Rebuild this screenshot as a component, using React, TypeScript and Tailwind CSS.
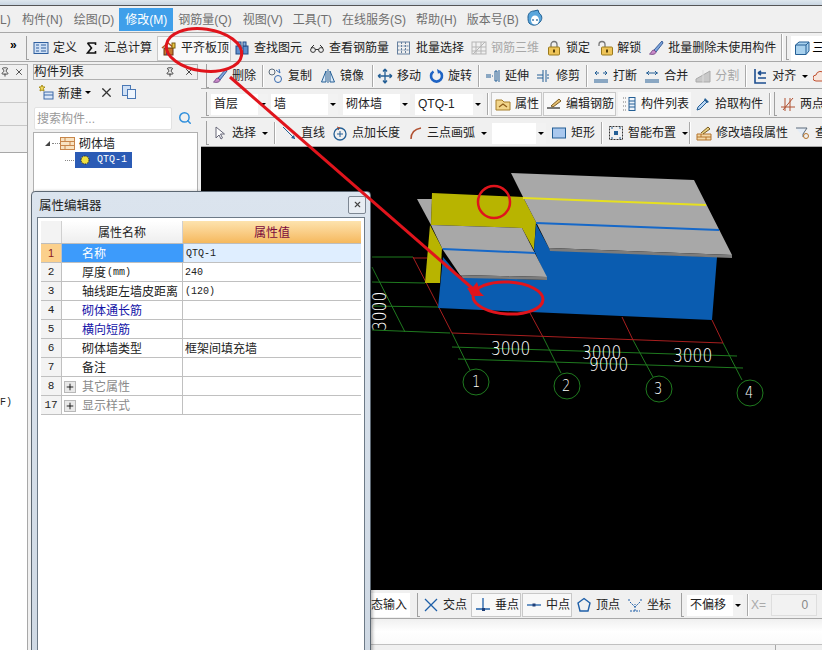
import React from 'react';
import { Search, Pin, X, Plus } from 'lucide-react';

const Ic = ({ children }: { children: React.ReactNode }) => (
  <svg width="16" height="16" viewBox="0 0 16 16" fill="none" className="shrink-0">
    {children}
  </svg>
);

const icons: Record<string, React.ReactNode> = {
  define: <><rect x="1" y="2.5" width="14" height="11" fill="#cfe0f5" stroke="#2f5f9e" /><path d="M8 5h5M8 8h5M8 11h5M3 5h3M3 8h3M3 11h3" stroke="#2f5f9e" /></>,
  sigma: <path d="M3.5 3h8v2M3.5 3l4 5-4 5h8v-2" stroke="#111" strokeWidth="1.6" />,
  slab: <><path d="M1 8l6-5 6 5" stroke="#b5541c" strokeWidth="1.5" /><rect x="3" y="8" width="9" height="7" fill="#c6792d" stroke="#6b3410" /><rect x="11" y="3" width="3" height="5" fill="#e9c33c" stroke="#7a5f10" /><path d="M5 15v-4h3v4" fill="#33518a" /></>,
  find: <><rect x="2" y="6" width="5" height="8" fill="#5d8fce" stroke="#234b85" /><rect x="9" y="6" width="5" height="8" fill="#5d8fce" stroke="#234b85" /><rect x="4" y="2" width="3" height="4" fill="#86b0e0" stroke="#234b85" /><rect x="9" y="2" width="3" height="4" fill="#86b0e0" stroke="#234b85" /><path d="M7 8h2" stroke="#234b85" /></>,
  glasses: <><circle cx="4" cy="10" r="2.4" stroke="#333" /><circle cx="12" cy="10" r="2.4" stroke="#333" /><path d="M6.4 9.5h3.2M2 8l3-3M14 8l-3-3" stroke="#333" /></>,
  batch: <><rect x="1.5" y="2" width="12" height="12" stroke="#66809f" /><path d="M1.5 6h12M1.5 10h12M5.5 2v12M9.5 2v12" stroke="#66809f" strokeDasharray="2 1" /></>,
  rebar3d: <><rect x="1" y="2" width="14" height="12" stroke="#b5b5b5" /><path d="M1 7h14M1 11h14M5 2v12M10 2v12M2 14L14 2" stroke="#b5b5b5" /></>,
  lock: <><path d="M5 7V4.5a3 3 0 016 0V7" stroke="#777" strokeWidth="1.3" /><rect x="2.5" y="7" width="11" height="8" rx="1" fill="#eec458" stroke="#9a7a1c" /><rect x="7" y="9.5" width="2" height="3" fill="#5a430a" /></>,
  unlock: <><path d="M2 6V4.5a3 3 0 016 0V7" stroke="#777" strokeWidth="1.3" /><rect x="4.5" y="7" width="11" height="8" rx="1" fill="#eec458" stroke="#9a7a1c" /><rect x="9" y="9.5" width="2" height="3" fill="#5a430a" /></>,
  brush: <><path d="M14 1L6 10l2 2 7-9z" fill="#7da5dc" stroke="#3b5f9a" /><path d="M6 10c-3 0-2 3-4.500 4 3 1 6.500 0 6.500-2z" fill="#c98ac9" stroke="#7c4d8a" /></>,
  cube: <><path d="M1.500 5L5 2h10v9l-3 3.500H1.500z" fill="#a8d1ee" stroke="#245f95" /><path d="M1.500 5H12v9.500M12 5l3-3" stroke="#245f95" /></>,
  copy: <><circle cx="4" cy="4" r="3" stroke="#5c6b7a" /><circle cx="10" cy="11" r="3.500" stroke="#3669b0" /><path d="M8 2l4 3-1-4" stroke="#3669b0" /></>,
  mirror: <><path d="M6 3L1.500 14H6zM10 3l4.500 11H10z" stroke="#245f95" fill="#dbe9f7" /><path d="M8 1v14" stroke="#245f95" /></>,
  move: <path d="M8 1v14M1 8h14M8 1L6 3.500M8 1l2 2.500M8 15l-2-2.500M8 15l2-2.500M1 8l2.500-2M1 8l2.500 2M15 8l-2.500-2M15 8l-2.500 2" stroke="#245f95" strokeWidth="1.3" />,
  rotate: <><path d="M11.500 3.500a5.500 5.500 0 11-6 0" stroke="#1e63c4" strokeWidth="2.600" /><path d="M9 1l3.500 2L10 6z" fill="#1e63c4" /></>,
  extend: <path d="M1 7h5M1 9h5M7 8h1M10 3v10h2V3zM14 2v12" stroke="#245f95" />,
  trim: <path d="M1 7h6M1 10h6M7 2v12M10 2v12M11 7h2M11 10h2" stroke="#245f95" />,
  breakI: <path d="M1 12h14M1 14h14M2 5h4M10 5h4M4 3L2 5l2 2M12 3l2 2-2 2" stroke="#245f95" />,
  merge: <path d="M1 12h14M1 14h14M2 5h12M5 3L3 5l2 2M11 3l2 2-2 2" stroke="#245f95" />,
  split: <><path d="M1 14h14V3L1 11z" fill="#c8c8c8" stroke="#aaa" /><path d="M8 2v13" stroke="#ddd" /></>,
  align: <path d="M3 1v14h11M14 5H6M14 10H6M6 5l3-2M6 5l3 2" stroke="#1d4e8f" strokeWidth="1.600" />,
  cloud: <path d="M3 13a3 3 0 010-6 4.500 4.500 0 018.500-1 3.500 3.500 0 011 7z" fill="#f7e5dc" stroke="#c05030" />,
  attr: <><path d="M1 4h6l2 2h6v8H1z" fill="#f2d58a" stroke="#a67e2a" /><path d="M4 11l4-3 4 3" stroke="#8f5f1a" strokeWidth="1.300" /></>,
  edit: <><path d="M1 12h13" stroke="#333" strokeWidth="1.300" /><path d="M5 10L13 3l2 2-8 6z" fill="#e8c070" stroke="#7a5a20" /></>,
  list: <><path d="M2 2h3M2 6h3M2 10h3M2 14h3" stroke="#777" strokeDasharray="1 1" /><rect x="8" y="1.500" width="6" height="13" fill="#eef4fb" stroke="#245f95" /><path d="M8 5h6M8 8h6M8 11h6" stroke="#245f95" /></>,
  pick: <><path d="M2 14l1-3 7-7 2 2-7 7z" fill="#b9d5f4" stroke="#245f95" /><path d="M10 2l4 4-2 1-3-3z" fill="#245f95" /></>,
  twoPt: <path d="M1 11h14M3 14L13 2M5 2v13M10 2v13" stroke="#b05030" />,
  select: <path d="M4 2v11l3-3 2 4 1.500-1-2-4h4z" fill="#fff" stroke="#667" />,
  line: <><path d="M2 2l12 12" stroke="#245f95" /><path d="M14 14l-4-1 3-3z" fill="#245f95" /></>,
  addLen: <><circle cx="8" cy="9" r="6" stroke="#245f95" strokeWidth="1.300" /><path d="M8 6v6M5 9h6" stroke="#245f95" /><path d="M5 2l3 1-2 2" stroke="#b05030" /></>,
  arc: <path d="M4 14C4 7 8 4 14 3" stroke="#b05030" strokeWidth="1.500" />,
  rect: <rect x="1.500" y="3" width="13" height="10" fill="#a9c8ee" stroke="#245f95" />,
  smart: <><rect x="1.500" y="1.500" width="13" height="13" stroke="#333" strokeDasharray="2 1" /><rect x="6" y="6" width="4" height="4" fill="#245f95" /><path d="M3 3h2M11 3h2M3 13h2M11 13h2" stroke="#245f95" /></>,
  wall: <><path d="M1 9h14v6H1zM1 12h14M5 9v3M10 12v3" fill="#f3d9a8" stroke="#b5742c" /><path d="M5 8l7-6 2 2-7 5" fill="#e8d080" stroke="#7a5a20" /></>,
  query: <><path d="M1 3h11L8 9v3" stroke="#5c6b7a" fill="#e5edf6" /><circle cx="11" cy="11" r="2.500" stroke="#b5742c" /></>,
  cross: <path d="M2 2l12 12M14 2L2 14" stroke="#1e5fa8" strokeWidth="1.300" />,
  perp: <><path d="M8 1v11M1 12h14" stroke="#1e5fa8" strokeWidth="1.300" /><rect x="7" y="11" width="3" height="3" fill="#1e3f78" /></>,
  mid: <><path d="M1 8h14" stroke="#1e5fa8" strokeWidth="1.300" /><rect x="6.500" y="6.500" width="3" height="3" fill="#1e3f78" /></>,
  vertex: <path d="M8 1.500l6 4.500-2 8H4L2 6z" stroke="#1e5fa8" strokeWidth="1.400" />,
  coord: <path d="M8 14V7M3 14h10M3 5l5 5 5-5M2 2v2M14 2v2" stroke="#1e5fa8" strokeDasharray="2 1" />,
};

const Caret = ({ className = '' }: { className?: string }) => (
  <span className={`w-0 h-0 shrink-0 border-x-[3px] border-t-[3px] border-x-transparent border-t-black ${className}`} />
);

type ToolProps = {
  icon: string;
  label: string;
  className?: string;
  disabled?: boolean;
  caret?: boolean;
};

const Tool = ({ icon, label, className = '', disabled, caret }: ToolProps) => (
  <div className={`flex items-center gap-[4px] shrink-0 ${disabled ? 'text-[#a8a8a8]' : 'text-[#222]'} ${className}`}>
    <Ic>{icons[icon]}</Ic>
    <span>{label}</span>
    {caret && <Caret className="ml-[2px]" />}
  </div>
);

const Sep = ({ className = '' }: { className?: string }) => (
  <div className={`w-[2px] h-[22px] shrink-0 border-l border-l-[#a9a9a9] border-r border-r-white ${className}`} />
);

const Grip = ({ className = '' }: { className?: string }) => (
  <div className={`w-[3px] h-[24px] shrink-0 border-l border-b border-[#a0a0a0] ${className}`} />
);

const Combo = ({ label, className = '' }: { label: string; className?: string }) => (
  <div className={`h-[21px] shrink-0 bg-white flex items-center justify-between pl-[3px] text-[#222] ${className}`}>
    <span>{label}</span>
    <div className="w-[10px] h-full bg-[#f2f2f2] flex items-center justify-center">
      <Caret />
    </div>
  </div>
);

const Row = ({ children, className = '' }: { children: React.ReactNode; className?: string }) => (
  <div className={`flex items-center shrink-0 overflow-hidden whitespace-nowrap pt-[2px] border-b border-[#a8a8a8] ${className}`}>
    {children}
  </div>
);

const menuItems = [
  { label: '构件(N)', cls: 'ml-[10px]' },
  { label: '绘图(D)', cls: 'ml-[11px]' },
];

const menuRest = [
  { label: '钢筋量(Q)', cls: 'ml-[5px]' },
  { label: '视图(V)', cls: 'ml-[11px]' },
  { label: '工具(T)', cls: 'ml-[10px]' },
  { label: '在线服务(S)', cls: 'ml-[10px]' },
  { label: '帮助(H)', cls: 'ml-[10px]' },
  { label: '版本号(B)', cls: 'ml-[10px]' },
];

const MenuBar = () => (
  <div className="h-[27px] shrink-0 flex items-center whitespace-nowrap pt-[2px] text-[#6f6f6f] border-b border-[#a8a8a8]">
    <span className="w-[12px]">L)</span>
    {menuItems.map((m) => (
      <span key={m.label} className={m.cls}>{m.label}</span>
    ))}
    <span className="ml-[5px] -mt-[2px] pt-[2px] h-[23px] w-[54px] bg-[#3f9fea] text-white flex items-center justify-center">修改(M)</span>
    {menuRest.map((m) => (
      <span key={m.label} className={m.cls}>{m.label}</span>
    ))}
    <svg width="18" height="18" viewBox="0 0 18 18" className="ml-[7px] -mt-[4px]">
      <path d="M2 8c0-3 2-6 6-6l4-1 1 3c3 2 4 6 1 9-3 4-8 4-11 1-1-2-1-4-1-6z" fill="#5aa6dc" stroke="#1f5f93" />
      <ellipse cx="9" cy="11" rx="4" ry="4.500" fill="#fff" />
      <path d="M7 10v2M11 10v2" stroke="#1f5f93" strokeWidth="1.200" />
    </svg>
  </div>
);

const MainToolbar = () => (
  <Row className="h-[29px]">
    <div className="w-[26px] shrink-0 pl-[10px] -mt-[6px] font-bold text-[12px] text-black">»</div>
    <Grip />
    <Tool icon="define" label="定义" className="ml-[4px]" />
    <Tool icon="sigma" label="汇总计算" className="ml-[7px]" />
    <Tool icon="slab" label="平齐板顶" className="ml-[5px] pl-[3px] pr-[1px] h-[25px] bg-[#f9f9f9] border border-[#c8c8c8]" />
    <Tool icon="find" label="查找图元" className="ml-[3px]" />
    <Tool icon="glasses" label="查看钢筋量" className="ml-[7px]" />
    <Tool icon="batch" label="批量选择" className="ml-[7px]" />
    <Tool icon="rebar3d" label="钢筋三维" className="ml-[7px]" disabled />
    <Tool icon="lock" label="锁定" className="ml-[7px]" />
    <Tool icon="unlock" label="解锁" className="ml-[7px]" />
    <Tool icon="brush" label="批量删除未使用构件" className="ml-[7px]" />
    <Sep className="ml-[5px] h-[28px]" />
    <Grip className="ml-[3px]" />
    <div className="ml-[2px] pl-[3px] h-[25px] bg-white flex items-center gap-[2px] grow">
      <Ic>{icons.cube}</Ic>
      <span>三维</span>
    </div>
  </Row>
);

const EditRow = () => (
  <Row className="h-[27px]">
    <Grip className="ml-[5px]" />
    <Tool icon="brush" label="删除" className="ml-[3px]" />
    <Sep className="ml-[6px]" />
    <Tool icon="copy" label="复制" className="ml-[4px]" />
    <Tool icon="mirror" label="镜像" className="ml-[8px]" />
    <Sep className="ml-[8px]" />
    <Tool icon="move" label="移动" className="ml-[3px]" />
    <Tool icon="rotate" label="旋转" className="ml-[7px]" />
    <Sep className="ml-[6px]" />
    <Tool icon="extend" label="延伸" className="ml-[5px]" />
    <Tool icon="trim" label="修剪" className="ml-[7px]" />
    <Sep className="ml-[6px]" />
    <Tool icon="breakI" label="打断" className="ml-[5px]" />
    <Tool icon="merge" label="合并" className="ml-[7px]" />
    <Tool icon="split" label="分割" className="ml-[7px]" disabled />
    <Sep className="ml-[6px]" />
    <Tool icon="align" label="对齐" className="ml-[5px]" caret />
    <div className="ml-[5px]"><Ic>{icons.cloud}</Ic></div>
  </Row>
);

const FloorRow = () => (
  <Row className="h-[29px]">
    <Grip className="ml-[5px]" />
    <Combo label="首层" className="ml-[2px] w-[57px]" />
    <Combo label="墙" className="ml-[3px] w-[67px]" />
    <Combo label="砌体墙" className="ml-[5px] w-[67px]" />
    <Combo label="QTQ-1" className="ml-[5px] w-[68px]" />
    <Sep className="ml-[4px]" />
    <Grip className="ml-[2px]" />
    <Tool icon="attr" label="属性" className="ml-[-3px] pl-[3px] pr-[2px] h-[24px] bg-[#f8f8f8] border border-[#c8c8c8]" />
    <Tool icon="edit" label="编辑钢筋" className="ml-[1px] pl-[2px] pr-[1px] h-[24px] bg-[#f8f8f8] border border-[#c8c8c8]" />
    <Tool icon="list" label="构件列表" className="ml-[2px] pl-[3px] pr-[2px] h-[24px] bg-[#f8f8f8]" />
    <Tool icon="pick" label="拾取构件" className="ml-[4px]" />
    <Sep className="ml-[6px]" />
    <Grip className="ml-[3px]" />
    <Tool icon="twoPt" label="两点" className="ml-[3px]" />
  </Row>
);

const DrawRow = () => (
  <Row className="h-[29px]">
    <Grip className="ml-[5px]" />
    <Tool icon="select" label="选择" className="ml-[3px]" caret />
    <Sep className="ml-[6px]" />
    <Tool icon="line" label="直线" className="ml-[5px]" />
    <Tool icon="addLen" label="点加长度" className="ml-[7px]" />
    <Tool icon="arc" label="三点画弧" className="ml-[7px]" caret />
    <Combo label="" className="ml-[5px] w-[54px]" />
    <Tool icon="rect" label="矩形" className="ml-[5px]" />
    <Sep className="ml-[6px]" />
    <Tool icon="smart" label="智能布置" className="ml-[5px]" caret />
    <Sep className="ml-[1px]" />
    <Tool icon="wall" label="修改墙段属性" className="ml-[5px]" />
    <Tool icon="query" label="查" className="ml-[7px]" />
  </Row>
);

// dimension text is drawn thin and a bit tall, like the CAD view font
const Dim = ({ x, y, size = 15.4, children }: { x: number; y: number; size?: number; children: React.ReactNode }) => (
  <text transform={`translate(${x} ${y}) scale(1 1.25)`} fontSize={size}>{children}</text>
);

const Canvas = () => (
  <div className="flex-1 min-h-0 bg-black overflow-hidden">
    <svg width="621" height="443" viewBox="201 147 621 443" className="block">
      <g stroke="#1f7a1f" fill="none">
        <path d="M372 257H413M372 282L425 283M372 306L438 307M372 330L450 333" />
        <path d="M372 267L405 332M452 333L470 370M543 337L561 373M633 340L653 377M723 343L742 380" />
        <path d="M452 347L737 356M458 359L743 368" />
        <circle cx="476" cy="382" r="13" />
        <circle cx="567" cy="386" r="13" />
        <circle cx="659" cy="389" r="13" />
        <circle cx="750" cy="393" r="13" />
      </g>
      <g stroke="#a81f1f" fill="none">
        <path d="M413 257L452 333L723 343L712 320M427 258H413M530 313L543 337M622 317L633 340" />
      </g>
      <polygon points="417,199 432,199 431,225" fill="#a8a8a8" />
      <polygon points="432,193 523,197 536,222 534,250 522,228 431,225" fill="#b8b400" />
      <polygon points="430,225 442,248 440,283 425,283" fill="#b8b400" />
      <polygon points="443,257 460,277 547,280 534,250 536,224 550,250 717,257 712,320 438,308" fill="#0a5cb0" />
      <polygon points="511,173 694,180 732,255 549,248 536,222 523,197" fill="#a8a8a8" />
      <polygon points="549,248 732,255 732,258 550,251" fill="#7c7c7c" />
      <polygon points="431,225 522,228 547,277 460,275 443,250" fill="#a8a8a8" />
      <polygon points="460,275 547,277 547,280 463,278" fill="#7c7c7c" />
      <path d="M523 198L706 205" stroke="#e6e020" strokeWidth="2" />
      <path d="M536 223L719 230" stroke="#1668c8" strokeWidth="2" />
      <path d="M443 249L535 253" stroke="#1668c8" strokeWidth="2" />
      <g fill="#fff" fontWeight="200" fontFamily="'DejaVu Sans', sans-serif">
        <Dim x={491} y={355}>3000</Dim>
        <Dim x={582} y={359}>3000</Dim>
        <Dim x={589} y={371}>9000</Dim>
        <Dim x={673} y={362}>3000</Dim>
        <Dim x={472} y={387} size={13}>1</Dim>
        <Dim x={562} y={391} size={13}>2</Dim>
        <Dim x={654} y={394} size={13}>3</Dim>
        <Dim x={745} y={398} size={13}>4</Dim>
        <text transform="translate(386 331) rotate(-90) scale(1 1.25)" fontSize="15.4">3000</text>
      </g>
    </svg>
  </div>
);

const SnapRow = () => (
  <Row className="h-[29px]">
    <div className="w-[209px] h-[24px] shrink-0 bg-white flex items-center justify-end pr-[3px] text-[#222]">动态输入</div>
    <Grip className="ml-[7px]" />
    <Tool icon="cross" label="交点" className="ml-[3px]" />
    <Tool icon="perp" label="垂点" className="ml-[4px] pl-[3px] pr-[1px] h-[24px] bg-[#f8f8f8] border border-[#c8c8c8]" />
    <Tool icon="mid" label="中点" className="ml-[1px] pl-[3px] pr-[1px] h-[24px] bg-[#f8f8f8] border border-[#c8c8c8]" />
    <Tool icon="vertex" label="顶点" className="ml-[4px]" />
    <Tool icon="coord" label="坐标" className="ml-[7px]" />
    <Grip className="ml-[10px]" />
    <Combo label="不偏移" className="ml-[3px] w-[56px]" />
    <Sep className="ml-[4px]" />
    <span className="ml-[2px] w-[17px] text-[#aaa]">X=</span>
    <div className="ml-[3px] w-[46px] h-[22px] bg-[#f2f2f2] border border-[#dedede] flex items-center justify-end pr-[8px] text-[#888]">0</div>
  </Row>
);

const LeftStrip = () => (
  <div className="w-[28px] shrink-0 flex flex-col border-r border-[#a8a8a8] mt-[2px]">
    <div className="h-[16px] border-y border-[#b0b0b0] flex items-center justify-between pr-[3px] overflow-hidden">
      <Pin size={10} className="text-[#333]" />
      <X size={10} className="text-[#333]" />
    </div>
    <div className="h-[23px] border-b border-[#c8c8c8]" />
    <div className="h-[23px] border-b border-[#c8c8c8]" />
    <div className="h-[27px] border-b border-[#a8a8a8]" />
    <div className="flex-1 bg-white relative font-['Liberation_Mono',monospace] text-[10px] text-[#222]">
      <span className="block mt-[245px]">F)</span>
    </div>
  </div>
);

const ListPanel = () => (
  <div className="w-[165px] ml-[5px] shrink-0 flex flex-col mt-[2px] text-[#222]">
    <div className="h-[16px] flex items-center justify-between border border-[#b0b0b0] pr-[3px] text-[12.500px]">
      <span>构件列表</span>
      <div className="flex items-center gap-[9px]">
        <Pin size={10} className="text-[#222]" />
        <X size={10} className="text-[#222]" />
      </div>
    </div>
    <div className="h-[24px] flex items-center pl-[5px] shrink-0">
      <svg width="16" height="16" viewBox="0 0 16 16" className="shrink-0">
        <path d="M4 1l1 2h2L5.500 4.500 6 7 4 6 2 7l.500-2.500L1 3h2z" fill="#efd75a" stroke="#a88f1c" />
        <rect x="6" y="8" width="9" height="7" fill="#dbe7f7" stroke="#3e6aa8" />
        <path d="M6 11h9" stroke="#3e6aa8" />
      </svg>
      <span className="ml-[4px] pt-[3px]">新建</span>
      <Caret className="ml-[3px]" />
      <X size={15} strokeWidth={2} className="ml-[8px] text-[#333]" />
      <svg width="16" height="16" viewBox="0 0 16 16" className="ml-[7px]">
        <rect x="1.500" y="1.500" width="8" height="10" fill="#cfe0f5" stroke="#4a78b5" />
        <rect x="6.500" y="5.500" width="8" height="9" fill="#eef5fd" stroke="#4a78b5" />
      </svg>
    </div>
    <div className="h-[28px] flex items-center shrink-0">
      <div className="w-[138px] h-[23px] ml-[1px] bg-white border border-[#e2e2e2] rounded-[2px] flex items-center pl-[2px] pt-[1px] text-[#999]">搜索构件...</div>
      <Search size={14} strokeWidth={2.500} className="ml-[6px] text-[#2f8fdc]" />
    </div>
    <div className="h-[200px] bg-white border border-[#b0b0b0] pt-[2px]">
      <div className="h-[17px] flex items-center pl-[11px]">
        <span className="w-0 h-0 border-l-[5px] border-b-[5px] border-l-transparent border-b-[#444]" />
        <span className="w-[8px] ml-[2px] border-t border-dotted border-[#888]" />
        <svg width="15" height="13" viewBox="0 0 15 13">
          <rect x=".5" y=".5" width="14" height="12" fill="#f8e3c2" stroke="#c8864a" />
          <path d="M0 4.500h15M0 8.500h15M5 .5v4M10 4.500v4M5 8.500v4" stroke="#c8864a" />
        </svg>
        <span className="ml-[4px]">砌体墙</span>
      </div>
      <div className="h-[16px] flex items-center pl-[31px]">
        <span className="w-[9px] border-t border-dotted border-[#888]" />
        <div className="h-[16px] w-[57px] ml-[1px] bg-[#2b5bb5] flex items-center pl-[4px] text-white font-['Liberation_Mono',monospace] text-[10px]">
          <svg width="12" height="12" viewBox="0 0 12 12">
            <circle cx="6" cy="6" r="4" fill="#f0e040" stroke="#222" strokeDasharray="1.500 1" />
          </svg>
          <span className="ml-[6px]">QTQ-1</span>
        </div>
      </div>
    </div>
  </div>
);

type Prop = {
  no: string;
  name: string;
  value?: React.ReactNode;
  mono?: boolean;
  blue?: boolean;
  group?: boolean;
};

const props: Prop[] = [
  { no: '2', name: '厚度', value: '240', mono: true },
  { no: '3', name: '轴线距左墙皮距离', value: '(120)', mono: true },
  { no: '4', name: '砌体通长筋', blue: true },
  { no: '5', name: '横向短筋', blue: true },
  { no: '6', name: '砌体墙类型', value: '框架间填充墙' },
  { no: '7', name: '备注' },
  { no: '8', name: '其它属性', group: true },
  { no: '17', name: '显示样式', group: true },
];

const mono = "font-['Liberation_Mono',monospace] text-[10px]";

const PropEditor = () => (
  <div className="absolute left-[31px] top-[191px] w-[340px] h-[470px] rounded-t-[4px] border border-[#5d6873] bg-gradient-to-b from-[#dbe4ee] to-[#cfd9e4] px-[5px] shadow-[2px_0_3px_rgba(0,0,0,0.25)] text-[#222]">
    <div className="h-[25px] flex items-center justify-between pl-[2px] text-[12.500px]">
      <span className="pt-[3px]">属性编辑器</span>
      <div className="w-[18px] h-[18px] mr-[-1px] border border-[#7d8793] rounded-[2px] bg-[#e8edf3] flex items-center justify-center">
        <X size={9} strokeWidth={3} className="text-[#444]" />
      </div>
    </div>
    <div className="h-[440px] bg-white border border-[#6d7a87] p-[3px]">
      <div className="grid grid-cols-[21px_121px_178px] h-[23px] border-b border-[#bdbdbd]">
        <div className="bg-[#f3f3f3] border-r border-[#d0d0d0]" />
        <div className="bg-gradient-to-b from-white to-[#eeeeee] flex items-center justify-center pt-[1px] border-r border-[#d0d0d0]">属性名称</div>
        <div className="bg-gradient-to-b from-[#fde3ae] to-[#f5b85c] text-[#7a0a3c] flex items-center justify-center pt-[1px]">属性值</div>
      </div>
      <div className="grid grid-cols-[21px_121px_178px] h-[19px] border-b border-[#c0c0c0]">
        <div className="bg-[#fbd08c] text-[#8a1a20] flex items-center justify-center pt-[1px] border-r border-[#c0c0c0] text-[11px]">1</div>
        <div className="bg-[#3d9bfb] text-white flex items-center pl-[20px] pt-[2px]">名称</div>
        <div className={`bg-[#dfeeff] flex items-center pl-[2px] pt-[1px] border-l border-[#c0c0c0] ${mono}`}>QTQ-1</div>
      </div>
      {props.map((p) => (
        <div key={p.no} className="grid grid-cols-[21px_121px_178px] h-[19px] border-b border-[#c0c0c0] bg-white">
          <div className={`bg-[#f3f3f3] flex items-center justify-center pt-[1px] border-r border-[#c0c0c0] ${mono} text-[11px]`}>{p.no}</div>
          <div className={`flex items-center whitespace-nowrap pt-[2px] border-r border-[#c0c0c0] ${p.group ? 'pl-[2px] text-[#8a8a8a]' : 'pl-[20px]'} ${p.blue ? 'text-[#1414a8]' : ''}`}>
            {p.group && (
              <span className="w-[12px] h-[12px] mr-[6px] bg-[#e8e8e8] border border-[#b8b8b8] flex items-center justify-center text-black">
                <Plus size={10} strokeWidth={2} />
              </span>
            )}
            {p.name}
            {p.no === '2' && <span className={`${mono} ml-[1px]`}>(mm)</span>}
          </div>
          <div className={`flex items-center pl-[2px] pt-[2px] ${p.mono ? mono : ''}`}>{p.value}</div>
        </div>
      ))}
    </div>
  </div>
);

const Annotations = () => (
  <svg width="822" height="650" viewBox="0 0 822 650" fill="none" className="absolute inset-0 pointer-events-none">
    <g stroke="#e0141c" strokeWidth="3">
      <ellipse cx="204" cy="50" rx="38" ry="21" transform="rotate(8 204 50)" />
      <circle cx="494" cy="202" r="16" strokeWidth="2.500" />
      <ellipse cx="508" cy="298" rx="35" ry="16" transform="rotate(3 508 298)" />
      <path d="M230 77L472 288" />
    </g>
    <polygon points="477,282 480,292 484,296 475,296 471,295 469,291 467,288 473,287" fill="#e0141c" />
  </svg>
);

export default function App() {
  return (
    <div className="relative w-[822px] h-[650px] overflow-hidden bg-[#f0f0f0] font-['Liberation_Sans','Noto_Sans_CJK_SC',sans-serif] text-[12px] leading-none flex flex-col">
      <div className="h-[6px] shrink-0 bg-gradient-to-b from-[#dfe7ee] to-[#c9d6e2] border-b border-[#555]" />
      <MenuBar />
      <MainToolbar />
      <div className="flex-1 min-h-0 flex">
        <LeftStrip />
        <ListPanel />
        <div className="w-[3px] shrink-0" />
        <div className="flex-1 min-w-0 flex flex-col">
          <EditRow />
          <FloorRow />
          <DrawRow />
          <Canvas />
          <SnapRow />
          <div className="h-[26px] shrink-0 bg-gradient-to-b from-[#f0f0f0] via-white to-[#fafafa] border-b border-[#c0c0c0]" />
          <div className="h-[5px] shrink-0 flex justify-end pr-[46px]">
            <div className="w-px bg-[#a8a8a8]" />
          </div>
        </div>
      </div>
      <PropEditor />
      <Annotations />
    </div>
  );
}
